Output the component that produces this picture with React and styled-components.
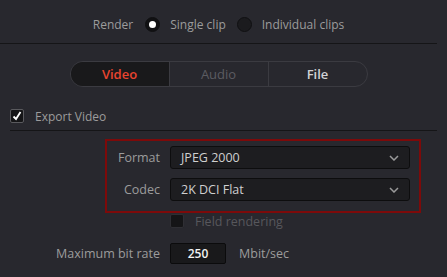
import React from "react";
import styled, { createGlobalStyle } from "styled-components";

const GlobalStyle = createGlobalStyle`
  html, body {
    margin: 0;
    padding: 0;
    background: #28282e;
  }
  body {
    font-family: "Open Sans", "Noto Sans", sans-serif;
    font-size: 12px;
    color: #9c9c9c;
  }
`;

const Panel = styled.div`
  width: 437px;
  height: 277px;
  padding-right: 10px;
  overflow: hidden;
`;

const RenderRow = styled.div`
  display: flex;
  align-items: center;
  justify-content: center;
  height: 37px;
  padding-top: 6px;
  border-bottom: 1px solid #151517;
`;

const RowLabel = styled.span`
  margin-right: 12px;
`;

const RadioOption = styled.label`
  display: flex;
  align-items: center;
  gap: 10px;
  margin-right: ${(p) => (p.$last ? 0 : 11)}px;
`;

const RadioDot = styled.span`
  width: 15px;
  height: 15px;
  box-sizing: border-box;
  border-radius: 50%;
  background: ${(p) => (p.$checked ? "#111113" : "#1b1b1e")};
  border: 1px solid #101012;
  display: flex;
  align-items: center;
  justify-content: center;
  &::after {
    content: "";
    display: ${(p) => (p.$checked ? "block" : "none")};
    width: 7px;
    height: 7px;
    border-radius: 50%;
    background: #fff;
  }
`;

const Tabs = styled.div`
  display: flex;
  width: 298px;
  height: 26px;
  margin: 17px auto 0;
  box-sizing: border-box;
  border: 1px solid #3b3b41;
  border-radius: 13px;
  overflow: hidden;
`;

const Tab = styled.div`
  flex: 1;
  display: flex;
  align-items: center;
  justify-content: center;
  font-size: 13px;
  background: ${(p) => (p.$active ? "#19191b" : "transparent")};
  color: ${(p) => p.$color};
  font-weight: ${(p) => (p.$bold ? 600 : 400)};
  & + & {
    border-left: 1px solid #3b3b41;
  }
`;

const CheckRow = styled.div`
  display: flex;
  align-items: center;
  gap: 11px;
  height: 28px;
  margin: 15px 0 0 10px;
  border-bottom: 1px solid #151517;
`;

const Check = styled.span`
  width: 14px;
  height: 14px;
  box-sizing: border-box;
  border-radius: 2px;
  background: #151517;
  border: 1px solid ${(p) => (p.$dim ? "#2f2f34" : "#5a5a5e")};
  display: flex;
  align-items: center;
  justify-content: center;
`;

const Highlight = styled.div`
  width: 316px;
  box-sizing: border-box;
  margin: 8px 0 0 105px;
  border: 2px solid #7d0a0a;
  padding: 5px 9px 10px 0;
  display: flex;
  flex-direction: column;
  gap: 9px;
`;

const FieldRow = styled.div`
  display: flex;
  align-items: center;
  gap: 10px;
`;

const FieldLabel = styled.span`
  width: ${(p) => p.$width}px;
  text-align: right;
  flex-shrink: 0;
  font-size: 12.5px;
`;

const Select = styled.div`
  width: 240px;
  height: 23px;
  box-sizing: border-box;
  background: #1d1d20;
  border: 1px solid #0d0d0e;
  border-radius: 3px;
  display: flex;
  align-items: center;
  justify-content: space-between;
  padding: 0 10px 0 10px;
  color: #cfcfcf;
  font-size: 12.5px;
`;

const OptionRow = styled.div`
  display: flex;
  align-items: center;
  gap: 11px;
  height: 16px;
  margin-left: 170px;
  color: #57575c;
  font-size: 12.5px;
`;

const BitRateRow = styled(FieldRow)`
  margin-top: 14px;
`;

const NumberBox = styled.div`
  width: 56px;
  height: 21px;
  box-sizing: border-box;
  background: #19191b;
  border: 1px solid #0b0b0c;
  border-radius: 2px;
  display: flex;
  align-items: center;
  justify-content: center;
  color: #f2f2f2;
  font-weight: 600;
`;

const Unit = styled.span`
  margin-left: 3px;
  font-size: 12.5px;
`;

const Chevron = () => (
  <svg width="10" height="6" viewBox="0 0 10 6">
    <path d="M1 1l4 4 4-4" fill="none" stroke="#9a9a9a" strokeWidth="1.5" />
  </svg>
);

const Tick = () => (
  <svg width="10" height="10" viewBox="0 0 10 10">
    <path d="M1.5 5.5l2.5 2.5 4.5-7" fill="none" stroke="#fff" strokeWidth="1.8" />
  </svg>
);

export default function App() {
  return (
    <Panel>
      <GlobalStyle />
      <RenderRow>
        <RowLabel>Render</RowLabel>
        <RadioOption>
          <RadioDot $checked />
          Single clip
        </RadioOption>
        <RadioOption $last>
          <RadioDot />
          Individual clips
        </RadioOption>
      </RenderRow>

      <Tabs>
        <Tab $active $bold $color="#e8442f">Video</Tab>
        <Tab $color="#5c5c62">Audio</Tab>
        <Tab $bold $color="#d2d2d6">File</Tab>
      </Tabs>

      <CheckRow>
        <Check>
          <Tick />
        </Check>
        Export Video
      </CheckRow>

      <Highlight>
        <FieldRow>
          <FieldLabel $width={53}>Format</FieldLabel>
          <Select>
            JPEG 2000
            <Chevron />
          </Select>
        </FieldRow>
        <FieldRow>
          <FieldLabel $width={53}>Codec</FieldLabel>
          <Select>
            2K DCI Flat
            <Chevron />
          </Select>
        </FieldRow>
      </Highlight>

      <OptionRow>
        <Check $dim />
        Field rendering
      </OptionRow>

      <BitRateRow>
        <FieldLabel $width={160}>Maximum bit rate</FieldLabel>
        <NumberBox>250</NumberBox>
        <Unit>Mbit/sec</Unit>
      </BitRateRow>
    </Panel>
  );
}
